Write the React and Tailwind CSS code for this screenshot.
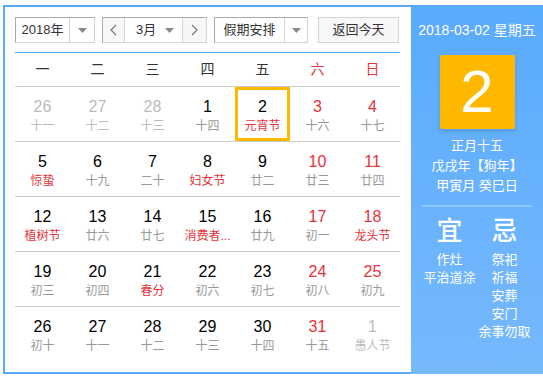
import React from "react";

const weekdays = ["一", "二", "三", "四", "五", "六", "日"];

// [day, lunar, festival?, otherMonth?]
const rows = [
  [[26, "十一", 0, 1], [27, "十二", 0, 1], [28, "十三", 0, 1], [1, "十四"], [2, "元宵节", 1], [3, "十六"], [4, "十七"]],
  [[5, "惊蛰", 1], [6, "十九"], [7, "二十"], [8, "妇女节", 1], [9, "廿二"], [10, "廿三"], [11, "廿四"]],
  [[12, "植树节", 1], [13, "廿六"], [14, "廿七"], [15, "消费者...", 1], [16, "廿九"], [17, "初一"], [18, "龙头节", 1]],
  [[19, "初三"], [20, "初四"], [21, "春分", 1], [22, "初六"], [23, "初七"], [24, "初八"], [25, "初九"]],
  [[26, "初十"], [27, "十一"], [28, "十二"], [29, "十三"], [30, "十四"], [31, "十五"], [1, "愚人节", 0, 1]],
];

const font = { fontFamily: '"Liberation Sans", "Noto Sans CJK SC", sans-serif' };

function Caret() {
  return (
    <svg width="9" height="5" viewBox="0 0 9 5">
      <path d="M0 0h9L4.5 5z" fill="#888" />
    </svg>
  );
}

function Chevron({ dir }) {
  return (
    <svg width="7" height="12" viewBox="0 0 7 12">
      <path
        d={dir === "left" ? "M6 1L1 6l5 5" : "M1 1l5 5-5 5"}
        fill="none"
        stroke="#777"
        strokeWidth="1.2"
      />
    </svg>
  );
}

function Cell({ item, col, selected }) {
  const [day, lunar, fest, other] = item;
  const weekend = col >= 5;
  const numColor = other ? "text-[#bbb]" : weekend ? "text-[#e6323a]" : "text-black";
  const lunarColor = other ? "text-[#bbb]" : fest ? "text-[#e6323a]" : "text-[#999]";
  return (
    <div
      className={
        "w-[55px] h-[54px] flex flex-col items-center " +
        (selected ? "border-[3px] border-[#ffb800] pt-[7px]" : "pt-[10px]")
      }
    >
      <div className={"text-[16px] leading-[20px] " + numColor}>{day}</div>
      <div className={"text-[12px] leading-[18px] whitespace-nowrap " + lunarColor}>{lunar}</div>
    </div>
  );
}

export default function App() {
  return (
    <div style={font} className="bg-white w-[543px] h-[378px] overflow-hidden">
      <div className="ml-[3px] mt-[5px] w-[540px] h-[369px] border-2 border-r-0 border-[#5aa8f8] flex">
        {/* left: calendar */}
        <div className="w-[406px] pl-[10px] pr-[11px] pt-[10px]">
          <div className="flex items-center h-[26px] text-[13px] text-[#333]">
            <div className="flex h-[26px] w-[80px] border border-[#aaa] border-r-[#d4d4d4] border-b-[#d4d4d4]">
              <div className="w-[54px] flex items-center justify-center border-r border-[#d4d4d4]">2018年</div>
              <div className="flex-1 flex items-center justify-center"><Caret /></div>
            </div>
            <div className="flex h-[26px] w-[105px] ml-[7px] border border-[#aaa] border-r-[#d4d4d4] border-b-[#d4d4d4]">
              <div className="w-[22px] flex items-center justify-center border-r border-[#d4d4d4] bg-[#f7f7f7]"><Chevron dir="left" /></div>
              <div className="w-[58px] flex items-center pl-[11px] justify-between pr-[8px] border-r border-[#d4d4d4]">
                <span>3月</span>
                <Caret />
              </div>
              <div className="flex-1 flex items-center justify-center bg-[#f7f7f7]"><Chevron dir="right" /></div>
            </div>
            <div className="flex h-[26px] w-[94px] ml-[7px] border border-[#aaa] border-r-[#d4d4d4] border-b-[#d4d4d4]">
              <div className="w-[70px] flex items-center justify-center border-r border-[#d4d4d4]">假期安排</div>
              <div className="flex-1 flex items-center justify-center"><Caret /></div>
            </div>
            <div className="h-[26px] w-[81px] ml-[10px] border border-[#d4d4d4] bg-[#f7f7f7] flex items-center justify-center">
              返回今天
            </div>
          </div>
          <div className="mt-[9px] h-px bg-[#5aa8f8]" />
          <div className="flex h-[34px] border-b border-[#ccc]">
            {weekdays.map((w, i) => (
              <div
                key={w}
                className={
                  "w-[55px] flex items-center justify-center text-[14px] " +
                  (i >= 5 ? "text-[#e6323a]" : "text-[#333]")
                }
              >
                {w}
              </div>
            ))}
          </div>
          {rows.map((row, r) => (
            <div key={r} className={"flex " + (r < rows.length - 1 ? "border-b border-[#ccc]" : "")}>
              {row.map((item, c) => (
                <Cell key={c} item={item} col={c} selected={r === 0 && c === 4} />
              ))}
            </div>
          ))}
        </div>

        {/* right: today panel */}
        <div className="w-[132px] h-[367px] bg-gradient-to-b from-[#59abfe] to-[#76b9fd] flex flex-col items-center text-white pt-[13px]">
          <div className="text-[14px] leading-[20px]">2018-03-02 星期五</div>
          <div className="mt-[15px] w-[75px] h-[74px] rounded-[2px] bg-[#ffb800] shadow-[0_2px_4px_rgba(0,0,0,0.15)] flex items-center justify-center text-[60px] leading-none">
            2
          </div>
          <div className="mt-[7px] text-[13px] leading-[20px] text-center">
            <div>正月十五</div>
            <div>戊戌年【狗年】</div>
            <div>甲寅月 癸巳日</div>
          </div>
          <div className="mt-[9px] w-[110px] h-[2px] bg-[#8ec6ff]" />
          <div className="mt-[9px] w-[110px] flex">
            <div className="w-[55px] flex flex-col items-center">
              <div className="text-[26px] leading-[30px] font-medium">宜</div>
              <div className="mt-[5px] text-[13px] leading-[18px] text-center">
                <div>作灶</div>
                <div>平治道涂</div>
              </div>
            </div>
            <div className="w-[55px] flex flex-col items-center">
              <div className="text-[26px] leading-[30px] font-medium">忌</div>
              <div className="mt-[5px] text-[13px] leading-[18px] text-center whitespace-nowrap">
                <div>祭祀</div>
                <div>祈福</div>
                <div>安葬</div>
                <div>安门</div>
                <div>余事勿取</div>
              </div>
            </div>
          </div>
        </div>
      </div>
    </div>
  );
}
